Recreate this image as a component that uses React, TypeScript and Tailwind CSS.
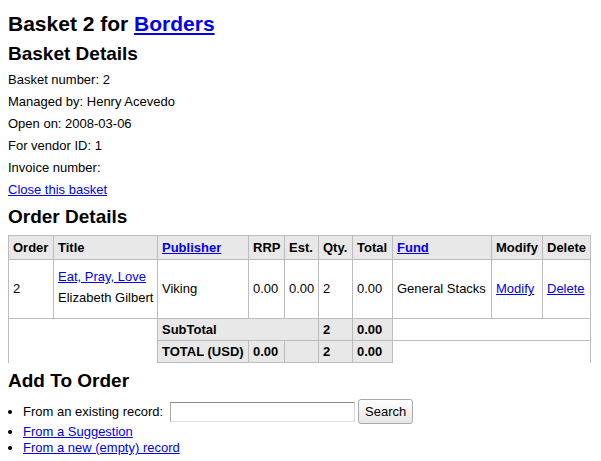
import React from 'react';

const link = 'text-[#0000ee] underline';
const cell = 'border border-[#bcbcbc] px-[4px] text-left align-middle';
const head = `${cell} bg-[#e8e8e8] font-bold py-[4px] leading-[15px]`;
const sum = `${cell} bg-[#e8e8e8] font-bold py-[3px] leading-[15px]`;

const DETAILS = ['Basket number: 2', 'Managed by: Henry Acevedo', 'Open on: 2008-03-06', 'For vendor ID: 1', 'Invoice number:'];

export default function App() {
  return (
    <div className="px-[8px] pb-[8px] text-[13px] text-black bg-white min-h-[461px]" style={{ fontFamily: '"Liberation Sans", Arial, sans-serif' }}>
      <h1 className="pt-[12px] text-[21px] leading-[24px] font-bold">
        Basket 2 for <a href="#" className={link}>Borders</a>
      </h1>
      <h2 className="mt-[7px] text-[19px] leading-[22px] font-bold">Basket Details</h2>
      <div className="mt-[4px]">
        {DETAILS.map((d) => <div key={d} className="leading-[22px]">{d}</div>)}
        <div className="leading-[22px]"><a href="#" className={link}>Close this basket</a></div>
      </div>

      <h2 className="mt-[5px] text-[19px] leading-[22px] font-bold">Order Details</h2>
      <table className="mt-[7px] w-[582px] table-fixed border-collapse">
        <thead>
          <tr>
            <th className={`${head} w-[45px]`}>Order</th>
            <th className={`${head} w-[104px]`}>Title</th>
            <th className={`${head} w-[91px]`}><a href="#" className={link}>Publisher</a></th>
            <th className={`${head} w-[36px]`}>RRP</th>
            <th className={`${head} w-[34px]`}>Est.</th>
            <th className={`${head} w-[34px]`}>Qty.</th>
            <th className={`${head} w-[40px]`}>Total</th>
            <th className={`${head} w-[99px]`}><a href="#" className={link}>Fund</a></th>
            <th className={`${head} w-[51px]`}>Modify</th>
            <th className={`${head} w-[48px]`}>Delete</th>
          </tr>
        </thead>
        <tbody>
          <tr>
            <td className={cell}>2</td>
            <td className={`${cell} pt-[6px] pb-[10px] leading-[21px]`}>
              <div><a href="#" className={link}>Eat, Pray, Love</a></div>
              <div className="whitespace-nowrap">Elizabeth Gilbert</div>
            </td>
            <td className={cell}>Viking</td>
            <td className={cell}>0.00</td>
            <td className={cell}>0.00</td>
            <td className={cell}>2</td>
            <td className={cell}>0.00</td>
            <td className={`${cell} whitespace-nowrap`}>General Stacks</td>
            <td className={cell}><a href="#" className={link}>Modify</a></td>
            <td className={cell}><a href="#" className={link}>Delete</a></td>
          </tr>
          <tr>
            <td rowSpan={2} colSpan={2} className="border border-b-0 border-[#bcbcbc]"></td>
            <td colSpan={3} className={sum}>SubTotal</td>
            <td className={sum}>2</td>
            <td className={sum}>0.00</td>
            <td colSpan={3} className="border border-[#bcbcbc]"></td>
          </tr>
          <tr>
            <td className={`${sum} whitespace-nowrap`}>TOTAL (USD)</td>
            <td className={sum}>0.00</td>
            <td className={sum}></td>
            <td className={sum}>2</td>
            <td className={sum}>0.00</td>
            <td colSpan={3} className="border border-b-0 border-[#bcbcbc]"></td>
          </tr>
        </tbody>
      </table>

      <h2 className="mt-[7px] text-[19px] leading-[22px] font-bold">Add To Order</h2>
      <ul className="mt-[7px] list-disc pl-[15px]">
        <li className="h-[25px]">
          <div className="flex items-center h-[25px]">
            <span>From an existing record:</span>
            <input type="text" className="ml-[7px] w-[185px] h-[20px] bg-white border border-t-[#8a8a8a] border-l-[#a8a8a8] border-r-[#d8d8d8] border-b-[#e0e0e0] outline-none" />
            <button className="ml-[3px] w-[55px] h-[25px] rounded-[3px] border border-[#a9a9a9] bg-gradient-to-b from-white to-[#e6e6e6] text-[13px] leading-[15px]">Search</button>
          </div>
        </li>
        <li className="leading-[16px]"><a href="#" className={link}>From a Suggestion</a></li>
        <li className="leading-[16px]"><a href="#" className={link}>From a new (empty) record</a></li>
      </ul>
    </div>
  );
}
